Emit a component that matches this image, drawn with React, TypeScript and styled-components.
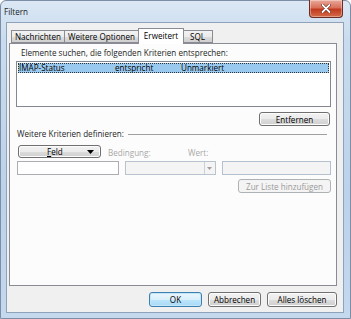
import React from "react";
import styled, { createGlobalStyle } from "styled-components";

const FS = "8.1px";

const Global = createGlobalStyle`
  html, body { margin: 0; padding: 0; background: #ffffff; }
  body { font-family: "Open Sans", "Noto Sans", sans-serif; font-size: ${FS}; color: #1e1e1e; }
  * { box-sizing: border-box; }
`;

const Window = styled.div`
  width: 351px;
  height: 319px;
  display: flex;
  flex-direction: column;
  padding: 0 6px 5px 5px;
  background: linear-gradient(180deg, #dbe7f4 0%, #c9dcef 12%, #bcd2ea 60%, #c4d8ee 100%);
  border: 1px solid #7b8ea6;
  border-radius: 6px 6px 0 0;
  position: relative;
`;

const TitleBar = styled.div`
  height: 21px;
  display: flex;
  align-items: center;
  margin-left: -2px;
  font-size: ${FS};
  color: #1b1b1b;
`;

const CloseBtn = styled.div`
  position: absolute;
  top: -1px;
  right: 7px;
  width: 34px;
  height: 18px;
  border: 1px solid #6d2b22;
  border-top: none;
  border-radius: 0 0 4px 4px;
  background: linear-gradient(180deg, #e9a99a 0%, #d9705a 45%, #c03a1e 55%, #d46b48 100%);
  display: flex;
  align-items: center;
  justify-content: center;
  box-shadow: inset 0 0 0 1px rgba(255,255,255,0.35);
`;

const Client = styled.div`
  flex: 1;
  background: #f0f0f0;
  border: 1px solid #8ea2ba;
  display: flex;
  flex-direction: column;
  padding: 4px 6px 5px 2px;
`;

const TabRow = styled.div`
  display: flex;
  align-items: flex-end;
  height: 16px;
  padding-left: 2px;
  position: relative;
  z-index: 1;
`;

const Tab = styled.div<{ $active?: boolean; $w: number }>`
  width: ${(p) => p.$w}px;
  height: ${(p) => (p.$active ? 16 : 13)}px;
  margin-left: ${(p) => (p.$active ? -1 : 0)}px;
  margin-right: ${(p) => (p.$active ? -1 : 0)}px;
  margin-bottom: ${(p) => (p.$active ? -1 : 0)}px;
  border: 1px solid #898c95;
  border-bottom: ${(p) => (p.$active ? "none" : "1px solid #898c95")};
  border-left-width: ${(p) => (p.$active ? 1 : 0)}px;
  background: ${(p) =>
    p.$active ? "#ffffff" : "linear-gradient(180deg, #f2f2f2 0%, #ebebeb 50%, #dddddd 51%, #cfcfcf 100%)"};
  display: flex;
  align-items: ${(p) => (p.$active ? "flex-start" : "center")};
  padding-top: ${(p) => (p.$active ? 1 : 0)}px;
  justify-content: center;
  font-size: ${FS};
  color: #000;
  white-space: nowrap;
  &:first-child { border-left-width: 1px; }
  z-index: ${(p) => (p.$active ? 2 : 0)};
`;

const Panel = styled.div`
  flex: 1;
  background: #fcfcfc;
  border: 1px solid #898c95;
  display: flex;
  flex-direction: column;
  padding: 3px 5px 0 6px;
`;

const Label = styled.div<{ $pl?: number }>`
  font-size: ${FS};
  color: #1e1e1e;
  white-space: nowrap;
  line-height: 11px;
  padding-left: ${(p) => p.$pl ?? 0}px;
`;

const ListBox = styled.div`
  margin-top: 3px;
  height: 46px;
  background: #ffffff;
  border: 1px solid #828790;
  padding: 1px;
`;

const ListRow = styled.div`
  height: 10px;
  background: #99c9ef;
  outline: 1px dotted #333;
  outline-offset: -1px;
  display: grid;
  grid-template-columns: 96px 66px 1fr;
  align-items: center;
  font-size: ${FS};
  line-height: 10px;
  color: #000;
  padding-left: 1px;
`;

const RightRow = styled.div`
  display: flex;
  justify-content: flex-end;
  margin-top: 5px;
  padding-right: 1px;
`;

const Button = styled.div<{ $w: number; $h?: number; $default?: boolean; $disabled?: boolean }>`
  width: ${(p) => p.$w}px;
  height: ${(p) => p.$h ?? 14}px;
  border: 1px solid ${(p) => (p.$disabled ? "#adb2b5" : p.$default ? "#3c7fb1" : "#707070")};
  border-radius: 3px;
  background: ${(p) =>
    p.$disabled
      ? "#f4f4f4"
      : p.$default
      ? "linear-gradient(180deg, #eaf6fd 0%, #d9f0fc 50%, #bee6fd 51%, #a7d9f5 100%)"
      : "linear-gradient(180deg, #f2f2f2 0%, #ebebeb 50%, #dddddd 51%, #cfcfcf 100%)"};
  box-shadow: inset 0 0 0 1px ${(p) => (p.$disabled ? "transparent" : p.$default ? "#c4e5f6" : "#fcfcfc")};
  display: flex;
  align-items: center;
  justify-content: center;
  font-size: ${FS};
  color: ${(p) => (p.$disabled ? "#9a9a9a" : "#000")};
  white-space: nowrap;
`;

const GroupHeader = styled.div`
  display: flex;
  align-items: center;
  gap: 4px;
  margin-top: 2px;
  padding-left: 1px;
  padding-right: 4px;
`;

const Rule = styled.div`
  flex: 1;
  height: 1px;
  background: #a0a0a0;
  margin-top: 1px;
`;

const LabelsRow = styled.div`
  display: grid;
  grid-template-columns: 90px 80px 1fr;
  margin-top: 6px;
  padding-left: 2px;
  align-items: end;
`;

const FieldButton = styled(Button)`
  justify-content: space-between;
  padding: 0 6px 0 28px;
`;

const Underline = styled.span`
  text-decoration: underline;
`;

const DisabledLabel = styled.div`
  font-size: ${FS};
  color: #a8a8a8;
  line-height: 10px;
`;

const InputsRow = styled.div`
  display: flex;
  gap: 6px;
  margin-top: 3px;
  padding-left: 1px;
`;

const TextInput = styled.div<{ $w: number; $disabled?: boolean }>`
  width: ${(p) => p.$w}px;
  height: 14px;
  border: 1px solid ${(p) => (p.$disabled ? "#b3c0cf" : "#abadb3")};
  background: ${(p) => (p.$disabled ? "#f4f4f4" : "#ffffff")};
`;

const Combo = styled.div`
  width: 91px;
  height: 14px;
  border: 1px solid #b9c3cf;
  background: #f4f4f4;
  display: flex;
  justify-content: flex-end;
`;

const ComboArrow = styled.div`
  width: 11px;
  border-left: 1px solid #c8d0da;
  display: flex;
  align-items: center;
  justify-content: center;
`;

const AddRow = styled.div`
  display: flex;
  justify-content: flex-end;
  margin-top: 4px;
`;

const Footer = styled.div`
  display: flex;
  justify-content: flex-end;
  gap: 6px;
  padding-top: 6px;
`;

export default function App() {
  return (
    <>
      <Global />
      <Window>
        <TitleBar>Filtern</TitleBar>
        <CloseBtn>
          <svg width="10" height="9" viewBox="0 0 10 9">
            <path d="M1.5 1 L8.5 8 M8.5 1 L1.5 8" stroke="#5a1a10" strokeWidth="3" strokeLinecap="round" />
            <path d="M1.5 1 L8.5 8 M8.5 1 L1.5 8" stroke="#ffffff" strokeWidth="1.8" strokeLinecap="round" />
          </svg>
        </CloseBtn>
        <Client>
          <TabRow>
            <Tab $w={54}>Nachrichten</Tab>
            <Tab $w={74}>Weitere Optionen</Tab>
            <Tab $w={46} $active>Erweitert</Tab>
            <Tab $w={30}>SQL</Tab>
          </TabRow>
          <Panel>
            <Label $pl={5}>Elemente suchen, die folgenden Kriterien entsprechen:</Label>
            <ListBox>
              <ListRow>
                <span>IMAP-Status</span>
                <span>entspricht</span>
                <span>Unmarkiert</span>
              </ListRow>
            </ListBox>
            <RightRow>
              <Button $w={71}>Entfernen</Button>
            </RightRow>
            <GroupHeader>
              <Label>Weitere Kriterien definieren:</Label>
              <Rule />
            </GroupHeader>
            <LabelsRow>
              <FieldButton $w={83} $h={13}>
                <span>
                  <Underline>F</Underline>eld
                </span>
                <svg width="7" height="4" viewBox="0 0 7 4">
                  <path d="M0 0 H7 L3.5 4 Z" fill="#000" />
                </svg>
              </FieldButton>
              <DisabledLabel>Bedingung:</DisabledLabel>
              <DisabledLabel>Wert:</DisabledLabel>
            </LabelsRow>
            <InputsRow>
              <TextInput $w={103} />
              <Combo>
                <ComboArrow>
                  <svg width="5" height="3" viewBox="0 0 5 3">
                    <path d="M0 0 H5 L2.5 3 Z" fill="#a0a0a0" />
                  </svg>
                </ComboArrow>
              </Combo>
              <TextInput $w={110} $disabled />
            </InputsRow>
            <AddRow>
              <Button $w={93} $disabled>Zur Liste hinzufügen</Button>
            </AddRow>
          </Panel>
          <Footer>
            <Button $w={53} $h={15} $default>OK</Button>
            <Button $w={53} $h={15}>Abbrechen</Button>
            <Button $w={70} $h={15}>Alles löschen</Button>
          </Footer>
        </Client>
      </Window>
    </>
  );
}
